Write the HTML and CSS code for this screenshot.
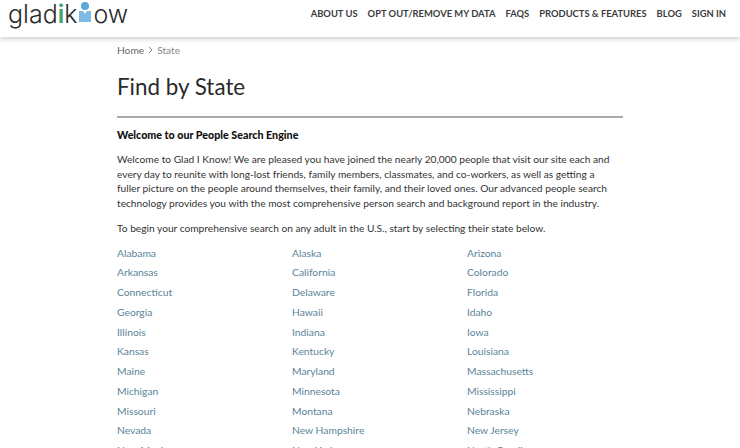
FILE: index.html
```html
<!DOCTYPE html>
<html>
<head>
  <link rel="stylesheet" href="styles.css">
</head>
<body>
  <header class="topbar">
    <a class="logo"><span>glad<span class="logo-i">i</span>k</span><svg class="logo-icon" width="14" height="22" viewBox="0 0 14 22"><circle cx="7" cy="5" r="4" fill="#5ba7dc"/><path d="M1 10h4l2 3 2-3h4v11H1z" fill="#7dbbe6"/></svg><span>ow</span></a>
    <nav class="menu">
      <a>ABOUT US</a>
      <a>OPT OUT/REMOVE MY DATA</a>
      <a>FAQS</a>
      <a>PRODUCTS &amp; FEATURES</a>
      <a>BLOG</a>
      <a>SIGN IN</a>
    </nav>
  </header>

  <div class="container">
    <div class="crumbs"><a>Home</a><svg class="sep" width="5" height="8" viewBox="0 0 5 8"><path d="M1 1l3 3-3 3" fill="none" stroke="#888" stroke-width="1"/></svg><span class="current">State</span></div>
    <h1>Find by State</h1>
    <hr>
    <h2>Welcome to our People Search Engine</h2>
    <p>Welcome to Glad I Know! We are pleased you have joined the nearly 20,000 people that visit our site each and every day to reunite with long-lost friends, family members, classmates, and co-workers, as well as getting a fuller picture on the people around themselves, their family, and their loved ones. Our advanced people search technology provides you with the most comprehensive person search and background report in the industry.</p>
    <p>To begin your comprehensive search on any adult in the U.S., start by selecting their state below.</p>
    <div class="states">
      <a>Alabama</a><a>Alaska</a><a>Arizona</a>
      <a>Arkansas</a><a>California</a><a>Colorado</a>
      <a>Connecticut</a><a>Delaware</a><a>Florida</a>
      <a>Georgia</a><a>Hawaii</a><a>Idaho</a>
      <a>Illinois</a><a>Indiana</a><a>Iowa</a>
      <a>Kansas</a><a>Kentucky</a><a>Louisiana</a>
      <a>Maine</a><a>Maryland</a><a>Massachusetts</a>
      <a>Michigan</a><a>Minnesota</a><a>Mississippi</a>
      <a>Missouri</a><a>Montana</a><a>Nebraska</a>
      <a>Nevada</a><a>New Hampshire</a><a>New Jersey</a>
      <a>New Mexico</a><a>New York</a><a>North Carolina</a>
    </div>
  </div>
</body>
</html>
```

FILE: styles.css
```css
body {
  margin: 0;
  height: 448px;
  overflow: hidden;
  background-color: #fff;
  font-family: "Lato", "Noto Sans", sans-serif;
  color: #222;
}
.topbar {
  height: 37px;
  display: flex;
  justify-content: space-between;
  align-items: flex-start;
  padding: 0 14px 0 8px;
  background-color: #fff;
  box-shadow: 0 2px 5px rgba(0, 0, 0, 0.2);
}
.logo {
  display: flex;
  align-items: flex-start;
  gap: 1px;
  padding-top: 1px;
  font-family: "Inter", sans-serif;
  font-size: 25px;
  font-weight: 300;
  line-height: 27px;
  color: #2b2b2b;
}
.logo-i {
  color: #3fa56b;
  font-weight: 600;
}
.menu {
  display: flex;
  gap: 10px;
  padding-top: 7px;
  font-size: 9.4px;
  line-height: 13px;
  font-weight: 700;
  color: #3c3c3c;
}
.container {
  width: 506px;
  margin-left: 117px;
}
.crumbs {
  display: flex;
  align-items: center;
  margin-top: 6px;
  font-size: 10.2px;
  line-height: 14px;
  color: #666;
}
.sep {
  margin: 0 4px;
}
.current {
  color: #888;
}
h1 {
  margin: 15px 0 0;
  font-size: 22.4px;
  line-height: 30px;
  font-weight: 400;
  color: #2a2a2a;
}
hr {
  margin: 14px 0 0;
  border: none;
  border-top: 2px solid #aaa;
}
h2 {
  margin: 10px 0 0;
  font-size: 10.7px;
  line-height: 14px;
  font-weight: 900;
  color: #111;
}
p {
  max-width: 495px;
  margin: 10px 0 0;
  font-size: 10.2px;
  line-height: 14.7px;
  color: #333;
}
.states {
  display: grid;
  grid-template-columns: 175px 175px 1fr;
  grid-auto-rows: 19.75px;
  margin-top: 8px;
  font-size: 10.3px;
  line-height: 19.75px;
  color: #5a8499;
}
```
